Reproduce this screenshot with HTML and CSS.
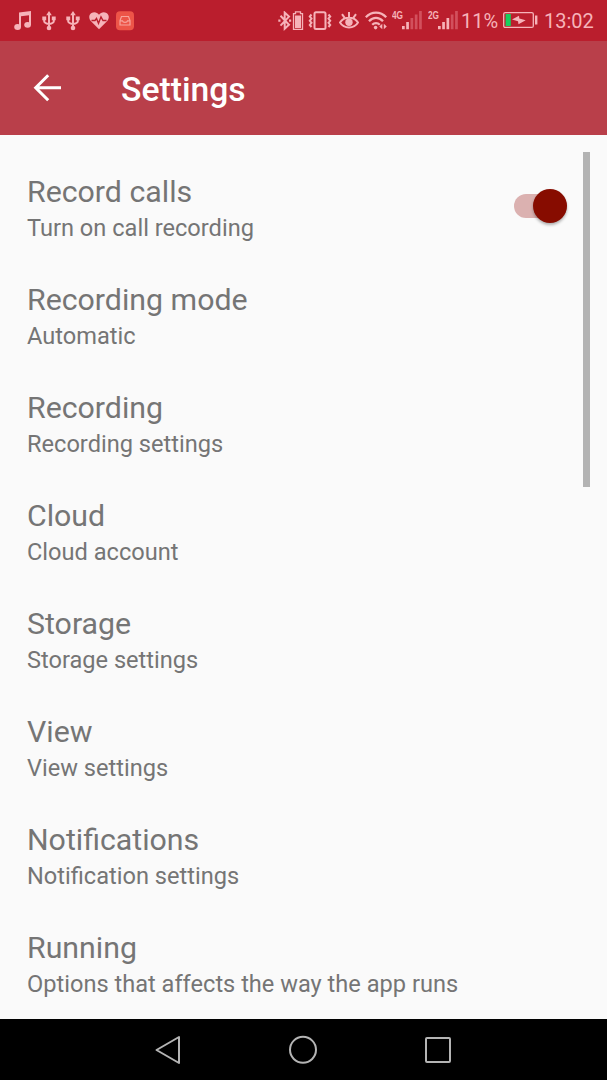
FILE: index.html
```html
<!DOCTYPE html>
<html lang="en">
<head>
    <meta charset="UTF-8">
    <meta name="viewport" content="width=device-width, initial-scale=1.0">
    <title>Settings</title>
    <link rel="stylesheet" href="styles.css">
</head>
<body>
    <div class="status-bar">
        <div class="status-left">
            <!-- music -->
            <svg width="18" height="20" viewBox="0 0 18 20"><path d="M5 1.5L17 0V4L7 5.2V16H5z"/><path d="M15 1h2v13h-2z"/><ellipse cx="3.6" cy="16" rx="3.4" ry="3"/><ellipse cx="13.6" cy="13.8" rx="3.4" ry="2.9"/></svg>
            <!-- usb -->
            <svg width="14" height="20" viewBox="0 0 14 20"><path class="line" d="M7 3v14M2.2 7v3.200q0 2 4.800 2.800M11.800 7v3.200q0 2-4.800 2.800"/><path d="M7 0l2.800 4.200H4.200zM.3 5.400h3.900v3.900H.3zM9.800 5.400h3.900v3.900H9.800z"/><circle cx="7" cy="17" r="2.3"/></svg>
            <svg width="14" height="20" viewBox="0 0 14 20"><path class="line" d="M7 3v14M2.2 7v3.200q0 2 4.800 2.800M11.800 7v3.200q0 2-4.800 2.800"/><path d="M7 0l2.800 4.200H4.200zM.3 5.400h3.900v3.900H.3zM9.800 5.400h3.900v3.900H9.800z"/><circle cx="7" cy="17" r="2.3"/></svg>
            <!-- heart rate -->
            <svg class="heart" width="20" height="20" viewBox="0 0 20 20"><path d="M10 18.2L2 10.3C-.6 7.3-.2 3.500 2.500 1.900 5.200.4 8.300 1.200 10 3.700c1.700-2.500 4.800-3.300 7.500-1.800 2.700 1.600 3.100 5.400.5 8.400z"/><path class="pulse" d="M2.500 9.500H6l1.500-2 2 4.800L12 5.800l2 3.700h3.500"/></svg>
            <!-- inbox -->
            <svg width="18" height="20" viewBox="0 0 18 20"><rect class="inbox-bg" y=".3" width="18" height="19" rx="4"/><path class="inbox-line" d="M5.500 5.500h7l1.500 4v4.500H4V9.500zM4 9.800h2.500c.4 2.200 4.600 2.200 5 0H14"/></svg>
        </div>
        <div class="status-right">
            <!-- bluetooth + battery -->
            <svg class="bluetooth" width="26" height="20" viewBox="0 0 26 20"><path class="line" d="M2.500 4.700l8.500 9-4.300 4V1.600l4.300 4-8.500 9"/><path d="M.3 8.500h2.200v2.200H.3zM11 8.500h2.200v2.200H11z"/><path class="thin" d="M15.500 2.600h2V.8h5v1.800h2v15.800h-9z"/><path d="M17 4.500h6V17h-6z"/></svg>
            <!-- vibrate -->
            <svg class="vibrate" width="24" height="20" viewBox="0 0 24 20"><rect class="line" x="6.500" y="1.200" width="11" height="16.800" rx="1.500"/><path class="line" d="M3.500 3.500L1.800 5.600l1.700 2-1.700 2.200 1.700 2-1.700 2.200 1.700 2M20.500 3.500l1.700 2.100-1.700 2 1.700 2.200-1.700 2 1.700 2.200-1.700 2"/></svg>
            <!-- eye -->
            <svg class="eye" width="20" height="20" viewBox="0 0 20 20"><path class="line" d="M1 11.500c4-6.500 14-6.500 18 0-4 6.500-14 6.500-18 0zM10 1v5M3 3.200l2.500 3.500M17 3.200L14.500 6.700"/><circle cx="10" cy="11.300" r="3.700"/></svg>
            <!-- wifi -->
            <svg class="wifi" width="23" height="20" viewBox="0 0 23 20"><path class="wave" d="M.8 6.300c5.700-6.300 14.700-6.300 20.400 0M4 10.200c4.200-4.500 9.800-4.500 14 0M7.200 13.700c2.200-2.200 5.400-2.200 7.600 0"/><circle cx="10.600" cy="16.600" r="1.800"/><path d="M14.300 15.500l3-2.700v5.400zM21.800 15.500l-3-2.700v5.400z"/></svg>
            <div class="signal">
                <span class="network">4G</span>
                <svg width="20" height="20" viewBox="0 0 20 20"><path d="M0 15h2.700v3.300H0zM4.200 11h2.700v7.300H4.200z"/><path class="dim" d="M8.500 7h2.700v11.300H8.500zM12.800 3.500h2.700v14.800h-2.700zM17.100 0h2.700v18.300h-2.700z"/></svg>
            </div>
            <div class="signal second">
                <span class="network">2G</span>
                <svg width="20" height="20" viewBox="0 0 20 20"><path d="M0 15h2.700v3.300H0zM4.200 11h2.700v7.300H4.200zM8.500 7h2.700v11.300H8.500z"/><path class="dim" d="M12.800 3.500h2.700v14.800h-2.700zM17.100 0h2.700v18.300h-2.700z"/></svg>
            </div>
            <span class="percent">11%</span>
            <svg width="35" height="20" viewBox="0 0 35 20"><rect class="thin" x=".7" y="1.600" width="29.600" height="14.800" rx="1.500"/><path class="charge" d="M2.600 3H7.800v12H2.600z"/><path d="M9 8.400l7-3.600.3 2.600 6.400 1.800-7.200 4-.5-3zM32 4.500h2.400v9H32z"/></svg>
            <span class="clock">13:02</span>
        </div>
    </div>

    <div class="toolbar">
        <svg class="back" width="28" height="28" viewBox="0 0 28 28"><path d="M28 13.700H3.500M15.200 1.200L2.700 13.700l12.500 12.500"/></svg>
        <h1>Settings</h1>
    </div>

    <div class="settings">
        <div class="item">
            <div class="text">
                <h2>Record calls</h2>
                <p>Turn on call recording</p>
            </div>
            <div class="switch"><div class="thumb"></div></div>
        </div>
        <div class="item"><div class="text"><h2>Recording mode</h2><p>Automatic</p></div></div>
        <div class="item"><div class="text"><h2>Recording</h2><p>Recording settings</p></div></div>
        <div class="item"><div class="text"><h2>Cloud</h2><p>Cloud account</p></div></div>
        <div class="item"><div class="text"><h2>Storage</h2><p>Storage settings</p></div></div>
        <div class="item"><div class="text"><h2>View</h2><p>View settings</p></div></div>
        <div class="item"><div class="text"><h2>Notifications</h2><p>Notification settings</p></div></div>
        <div class="item"><div class="text"><h2>Running</h2><p>Options that affects the way the app runs</p></div></div>
        <div class="scrollbar"></div>
    </div>

    <div class="nav-bar">
        <svg width="28" height="30" viewBox="0 0 28 30"><path d="M25 2v26L2.500 15z"/></svg>
        <svg width="28" height="30" viewBox="0 0 28 30"><circle cx="14" cy="14.800" r="13"/></svg>
        <svg width="28" height="30" viewBox="0 0 28 30"><rect x="2" y="3" width="24" height="24" rx="1"/></svg>
    </div>
</body>
</html>
```

FILE: styles.css
```css
* {
    box-sizing: border-box;
}

body {
    margin: 0;
    height: 1080px;
    display: flex;
    flex-direction: column;
    overflow: hidden;
    background: #fafafa;
    font-family: Roboto, sans-serif;
}

h1, h2, p {
    margin: 0;
}

svg {
    display: block;
    flex-shrink: 0;
}

/* status bar */
.status-bar {
    height: 41px;
    flex-shrink: 0;
    padding: 2px 13px 1px 14px;
    display: flex;
    justify-content: space-between;
    align-items: center;
    background: #ba1e2d;
    color: #f6b3b9;
}

.status-bar svg {
    fill: #f6b3b9;
}

.status-left, .status-right, .signal {
    display: flex;
    align-items: center;
}

.status-left {
    gap: 10px;
}

.status-left .heart {
    margin: 0 -3px 0 -1px;
}

.status-bar .line, .status-bar .thin, .status-bar .wave {
    fill: none;
    stroke: #f6b3b9;
    stroke-width: 2;
}

.status-bar .thin {
    stroke-width: 1.3;
}

.status-bar .wave {
    stroke-width: 2.3;
}

.status-bar .pulse {
    fill: none;
    stroke: #ba1e2d;
    stroke-width: 1.4;
}

.status-bar .inbox-bg {
    fill: #ed5548;
}

.status-bar .inbox-line {
    fill: none;
    stroke: #f8a39b;
    stroke-width: 1.2;
}

.status-bar .dim {
    fill: #d2505d;
}

.status-bar .charge {
    fill: #18cf5d;
}

.bluetooth {
    margin-left: -1px;
}

.vibrate {
    margin-left: 4px;
}

.eye {
    margin-left: 7px;
}

.wifi {
    margin-left: 6px;
}

.signal {
    margin-left: 4px;
}

.signal.second {
    margin-left: 6px;
}

.network {
    width: 10px;
    height: 20px;
    font-family: "Liberation Sans", sans-serif;
    font-size: 11.5px;
    font-weight: bold;
    line-height: 9px;
    transform: scaleX(0.72);
    transform-origin: left;
}

.percent {
    width: 45px;
    padding-left: 3px;
    font-size: 20px;
}

.clock {
    width: 56px;
    padding-left: 6px;
    font-size: 20px;
}

/* toolbar */
.toolbar {
    height: 94px;
    flex-shrink: 0;
    padding-left: 33px;
    display: flex;
    align-items: center;
    background: #b93f4a;
    color: #fff;
}

.back {
    margin-right: 60px;
    fill: none;
    stroke: #fff;
    stroke-width: 3;
}

h1 {
    padding-top: 4px;
    font-size: 33.7px;
    font-weight: 500;
    line-height: 40px;
}

/* settings list */
.settings {
    position: relative;
    flex: 1;
    padding-top: 17px;
    overflow: hidden;
}

.item {
    height: 108px;
    padding: 0 40px 0 27px;
    display: flex;
    justify-content: space-between;
    align-items: center;
    color: #757575;
}

.text {
    padding-top: 4px;
}

h2 {
    margin-bottom: 4px;
    font-size: 30.3px;
    font-weight: 400;
    line-height: 36px;
}

p {
    font-size: 23.6px;
    line-height: 28px;
}

.switch {
    width: 53px;
    height: 24px;
    border-radius: 12px;
    background: #dbb1b0;
    display: flex;
    align-items: center;
    justify-content: flex-end;
}

.thumb {
    width: 34px;
    height: 34px;
    flex-shrink: 0;
    border-radius: 50%;
    background: #870c00;
    box-shadow: 0 2px 3px rgba(0, 0, 0, 0.3);
}

.scrollbar {
    position: absolute;
    top: 17px;
    right: 17px;
    width: 7px;
    height: 335px;
    background: #b3b3b3;
}

/* navigation bar */
.nav-bar {
    height: 61px;
    flex-shrink: 0;
    padding-right: 1px;
    display: flex;
    justify-content: center;
    align-items: center;
    gap: 107px;
    background: #000;
}

.nav-bar svg {
    fill: none;
    stroke: #b4b4b4;
    stroke-width: 2;
    stroke-linejoin: round;
}
```
